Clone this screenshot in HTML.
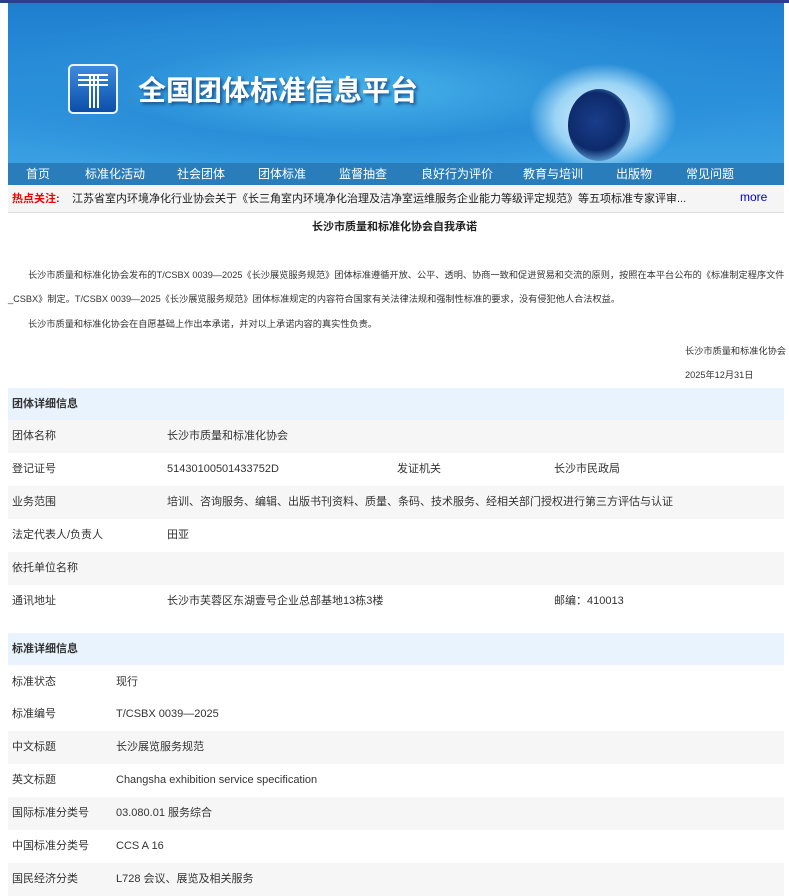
<!DOCTYPE html>
<html><head><meta charset="utf-8"><style>
*{margin:0;padding:0;box-sizing:border-box}
body{width:789px;height:895px;overflow:hidden;background:#fff;font-family:"Liberation Sans","Noto Sans CJK SC",sans-serif;color:#333}
.wrap{position:absolute;left:8px;width:776px}
.topbar{position:absolute;left:0;top:0;width:789px;height:3px;background:#2b3f8f}
.banner{top:3px;height:160px;overflow:hidden;background:radial-gradient(ellipse at 45% 55%,#46b2ea 0,#2a8fd8 40%,transparent 70%),linear-gradient(180deg,#1f7fcf 0,#2b90dc 60%,#3aa0e2 100%)}
.glow{position:absolute;left:520px;top:60px;width:150px;height:110px;border-radius:50%;background:radial-gradient(ellipse,#e6f6ff 0,#9bd4f5 45%,transparent 70%)}
.globe{position:absolute;left:560px;top:86px;width:62px;height:72px;border-radius:50%;background:radial-gradient(circle at 45% 45%,#1a3d8a 0,#0d2a6b 55%,#6fbcef 85%,#e6f6ff 100%)}
.logo{position:absolute;left:60px;top:61px;width:50px;height:50px;border:2px solid #e8f4ff;border-radius:5px;background:linear-gradient(#3f8be0,#0a4ea8)}
.logo i{position:absolute;background:#fff}
.title{position:absolute;left:130px;top:68px;font-size:28px;line-height:36px;font-weight:bold;color:#fff;text-shadow:2px 2px 3px #1a4f8a;font-family:"Noto Sans CJK SC",sans-serif}
.nav{top:163px;height:22px;background:#2a7dbb;font-size:12px;color:#fff}
.nav span{position:absolute;top:0;line-height:22px}
.hot{top:185px;height:28px;background:#f5f5f5;border-bottom:1px solid #ddd;font-size:11px;line-height:28px}
.hot b{position:absolute;left:4px;top:0;color:#e00;font-weight:bold}
.hot .t{position:absolute;left:64px;top:0;color:#222}
.hot .m{position:absolute;left:732px;top:-2px;color:#00c;font-size:12px}
.h1{position:absolute;top:219px;left:0;width:789px;text-align:center;font-size:11px;line-height:16px;font-weight:bold;color:#222}
.p{position:absolute;font-size:9.2px;line-height:12px;color:#333;white-space:nowrap}
.sec{position:absolute;left:8px;width:776px;height:32px;background:#e8f3fd;font-size:11px;line-height:32px;font-weight:bold;color:#333;padding:0 4px}
.row{position:absolute;left:8px;width:776px;height:33px;font-size:11px;line-height:33px;color:#333}
.g{background:#f6f6f6}
.row span{position:absolute;top:0}
</style></head><body>
<div class="topbar"></div>
<div class="wrap banner">
<div class="glow"></div>
<div class="globe"></div>
<div class="logo"><i style="left:8px;top:8px;width:30px;height:2px"></i><i style="left:8px;top:13px;width:30px;height:2px"></i><i style="left:8px;top:18px;width:30px;height:2px"></i><i style="left:19px;top:8px;width:2px;height:34px"></i><i style="left:23px;top:8px;width:2px;height:34px"></i><i style="left:27px;top:8px;width:2px;height:34px"></i></div>
<div class="title">全国团体标准信息平台</div>
</div>
<div class="wrap nav">
<span style="left:18px">首页</span><span style="left:77px">标准化活动</span><span style="left:169px">社会团体</span><span style="left:250px">团体标准</span><span style="left:331px">监督抽查</span><span style="left:413px">良好行为评价</span><span style="left:515px">教育与培训</span><span style="left:608px">出版物</span><span style="left:678px">常见问题</span>
</div>
<div class="wrap hot"><b>热点关注:</b><span class="t">江苏省室内环境净化行业协会关于《长三角室内环境净化治理及洁净室运维服务企业能力等级评定规范》等五项标准专家评审...</span><span class="m">more</span></div>
<div class="h1">长沙市质量和标准化协会自我承诺</div>
<div class="p" style="left:28px;top:269px">长沙市质量和标准化协会发布的T/CSBX 0039—2025《长沙展览服务规范》团体标准遵循开放、公平、透明、协商一致和促进贸易和交流的原则，按照在本平台公布的《标准制定程序文件</div>
<div class="p" style="left:8px;top:293px">_CSBX》制定。T/CSBX 0039—2025《长沙展览服务规范》团体标准规定的内容符合国家有关法律法规和强制性标准的要求，没有侵犯他人合法权益。</div>
<div class="p" style="left:28px;top:318px">长沙市质量和标准化协会在自愿基础上作出本承诺，并对以上承诺内容的真实性负责。</div>
<div class="p" style="left:685px;top:345px">长沙市质量和标准化协会</div>
<div class="p" style="left:685px;top:369px">2025年12月31日</div>
<div class="sec" style="top:388px">团体详细信息</div>
<div class="row g" style="top:420px"><span style="left:4px">团体名称</span><span style="left:159px">长沙市质量和标准化协会</span></div>
<div class="row" style="top:453px"><span style="left:4px">登记证号</span><span style="left:159px">51430100501433752D</span><span style="left:389px">发证机关</span><span style="left:546px">长沙市民政局</span></div>
<div class="row g" style="top:486px"><span style="left:4px">业务范围</span><span style="left:159px">培训、咨询服务、编辑、出版书刊资料、质量、条码、技术服务、经相关部门授权进行第三方评估与认证</span></div>
<div class="row" style="top:519px"><span style="left:4px">法定代表人/负责人</span><span style="left:159px">田亚</span></div>
<div class="row g" style="top:552px"><span style="left:4px">依托单位名称</span></div>
<div class="row" style="top:585px"><span style="left:4px">通讯地址</span><span style="left:159px">长沙市芙蓉区东湖壹号企业总部基地13栋3楼</span><span style="left:546px">邮编：410013</span></div>
<div class="sec" style="top:633px">标准详细信息</div>
<div class="row" style="top:666px"><span style="left:4px">标准状态</span><span style="left:108px">现行</span></div>
<div class="row" style="top:698px"><span style="left:4px">标准编号</span><span style="left:108px">T/CSBX 0039—2025</span></div>
<div class="row g" style="top:731px"><span style="left:4px">中文标题</span><span style="left:108px">长沙展览服务规范</span></div>
<div class="row" style="top:764px"><span style="left:4px">英文标题</span><span style="left:108px">Changsha exhibition service specification</span></div>
<div class="row g" style="top:797px"><span style="left:4px">国际标准分类号</span><span style="left:108px">03.080.01 服务综合</span></div>
<div class="row" style="top:830px"><span style="left:4px">中国标准分类号</span><span style="left:108px">CCS A 16</span></div>
<div class="row g" style="top:863px"><span style="left:4px">国民经济分类</span><span style="left:108px">L728 会议、展览及相关服务</span></div>
</body></html>
